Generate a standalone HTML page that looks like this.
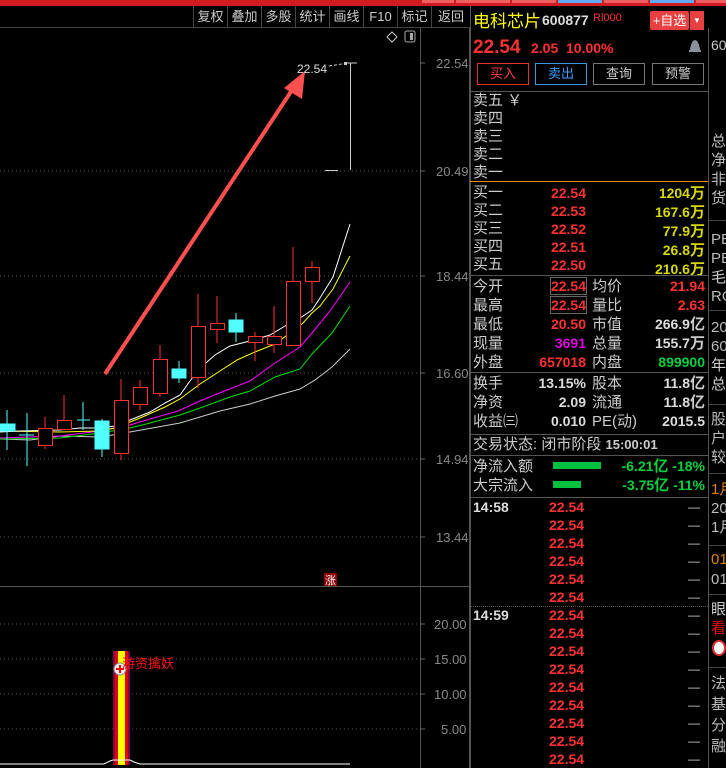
<!DOCTYPE html>
<html><head><meta charset="utf-8"><style>
*{margin:0;padding:0;box-sizing:border-box}
body{width:726px;height:768px;background:#000;overflow:hidden;position:relative;font-family:"Liberation Sans","Noto Sans CJK SC",sans-serif;color:#ccc}
.a{position:absolute;white-space:nowrap}
.cn{font-family:"Liberation Sans","Noto Sans CJK SC",sans-serif;font-size:15px;color:#ccc;line-height:18px}
.n{font-weight:bold;font-size:14px;line-height:18px}
.r{color:#ff3232}.y{color:#e8e800}.g{color:#00d040}.w{color:#ddd}.m{color:#e000e0}
.tb{position:absolute;top:6px;height:22px;border-left:1px solid #444;font-size:13px;color:#ccc;text-align:center;line-height:21px}
.hl{position:absolute;height:1px;background:#444}
.ax{font-size:13px;color:#888;font-family:"Liberation Sans",sans-serif}
.btn{position:absolute;top:63px;height:22px;font-size:13px;text-align:center;line-height:20px}
</style></head><body>
<div class="a" style="left:0;top:0;width:726px;height:6px;background:#d01c1f"></div>
<div class="a" style="left:422px;top:0;width:32px;height:3px;background:#f06060"></div>
<div class="a" style="left:456px;top:0;width:54px;height:3px;background:#f06060"></div>
<div class="a" style="left:512px;top:0;width:44px;height:3px;background:#f06060"></div>
<div class="a" style="left:558px;top:0;width:44px;height:3px;background:#60a8f0"></div>
<div class="a" style="left:604px;top:0;width:44px;height:3px;background:#f06060"></div>
<div class="a" style="left:650px;top:0;width:44px;height:3px;background:#60a8f0"></div>
<div class="a" style="left:696px;top:0;width:30px;height:3px;background:#f06060"></div>

<div class="tb" style="left:193px;width:34px">复权</div>
<div class="tb" style="left:227px;width:34px">叠加</div>
<div class="tb" style="left:261px;width:34px">多股</div>
<div class="tb" style="left:295px;width:34px">统计</div>
<div class="tb" style="left:329px;width:34px">画线</div>
<div class="tb" style="left:363px;width:34px">F10</div>
<div class="tb" style="left:397px;width:34px">标记</div>
<div class="tb" style="left:431px;width:39px">返回</div>
<div class="hl" style="left:0;top:27px;width:470px"></div>

<!-- chart svg -->
<svg class="a" style="left:0;top:0" width="470" height="768">
<g stroke="#555" stroke-dasharray="1,3">
<line x1="0" y1="171" x2="420" y2="171"/><line x1="0" y1="276" x2="420" y2="276"/><line x1="0" y1="373" x2="420" y2="373"/><line x1="0" y1="459" x2="420" y2="459"/><line x1="0" y1="537" x2="420" y2="537"/>
<line x1="0" y1="624" x2="420" y2="624"/><line x1="0" y1="659" x2="420" y2="659"/><line x1="0" y1="694" x2="420" y2="694"/><line x1="0" y1="729" x2="420" y2="729"/>
</g>
<line x1="420.5" y1="28" x2="420.5" y2="768" stroke="#555"/>
<line x1="0" y1="586.5" x2="470" y2="586.5" stroke="#555"/>
<line x1="469.5" y1="28" x2="469.5" y2="768" stroke="#555"/>
<g stroke="#666"><line x1="420" y1="63" x2="425" y2="63"/><line x1="420" y1="171" x2="425" y2="171"/><line x1="420" y1="276" x2="425" y2="276"/><line x1="420" y1="373" x2="425" y2="373"/><line x1="420" y1="459" x2="425" y2="459"/><line x1="420" y1="537" x2="425" y2="537"/>
<line x1="420" y1="624" x2="425" y2="624"/><line x1="420" y1="659" x2="425" y2="659"/><line x1="420" y1="694" x2="425" y2="694"/><line x1="420" y1="729" x2="425" y2="729"/></g>
<text x="436" y="68" class="ax" fill="#888" font-size="13">22.54</text>
<text x="436" y="176" fill="#888" font-size="13">20.49</text>
<text x="436" y="281" fill="#888" font-size="13">18.44</text>
<text x="436" y="378" fill="#888" font-size="13">16.60</text>
<text x="436" y="464" fill="#888" font-size="13">14.94</text>
<text x="436" y="542" fill="#888" font-size="13">13.44</text>
<text x="434" y="629" fill="#888" font-size="13">20.00</text>
<text x="434" y="664" fill="#888" font-size="13">15.00</text>
<text x="434" y="699" fill="#888" font-size="13">10.00</text>
<text x="441" y="734" fill="#888" font-size="13">5.00</text>
<!-- icons top right -->
<path d="M392 32 L397 37 L392 42 L387 37 Z" fill="none" stroke="#ccc"/>
<rect x="405" y="31" width="10" height="11" rx="2" fill="none" stroke="#aaa"/><rect x="410" y="33" width="3" height="7" fill="#aaa"/>
<!-- MA lines -->
<polyline fill="none" stroke="#ccc" stroke-width="1" points="0,439 30,440 60,436 100,437 130,432 180,423 220,411 250,404 275,396 300,389 315,380 332,367 350,349"/>
<polyline fill="none" stroke="#00e000" stroke-width="1" points="0,439 60,438 100,433 130,428 150,423 180,415 200,408 230,397 250,391 275,377 300,369 312,354 332,333 350,306"/>
<polyline fill="none" stroke="#ff00ff" stroke-width="1" points="0,438 60,436 100,431 130,425 150,419 178,411 200,401 222,392 250,381 275,363 300,347 312,333 330,311 350,282"/>
<polyline fill="none" stroke="#ffff00" stroke-width="1" points="0,431 60,432 100,431 115,428 140,418 165,407 180,399 200,384 220,371 237,360 255,352 275,344 290,333 303,323 312,313 320,306 333,289 350,256"/>
<polyline fill="none" stroke="#fff" stroke-width="1" points="0,432 20,431 60,430 80,428 100,428 115,426 130,420 150,412 165,403 180,395 190,381 200,368 215,355 230,346 250,341 270,335 285,326 300,318 312,310 320,298 333,277 350,224"/>
<!-- candles -->
<g stroke="#ff3030" fill="none" stroke-width="1">
<line x1="45" y1="417" x2="45" y2="449"/><rect x="38.5" y="428.5" width="14" height="17" fill="#000"/>
<line x1="64" y1="395" x2="64" y2="420"/><rect x="57.5" y="420.5" width="14" height="9" fill="#000"/>
<line x1="121" y1="379" x2="121" y2="460"/><rect x="114.5" y="400.5" width="14" height="53" fill="#000"/>
<line x1="140" y1="380" x2="140" y2="410"/><rect x="133.5" y="387.5" width="14" height="17" fill="#000"/>
<line x1="160" y1="345" x2="160" y2="397"/><rect x="153.5" y="359.5" width="14" height="34" fill="#000"/>
<line x1="198" y1="294" x2="198" y2="388"/><rect x="191.5" y="326.5" width="14" height="51" fill="#000"/>
<line x1="217" y1="296" x2="217" y2="343"/><rect x="210.5" y="323.5" width="14" height="6" fill="#000"/>
<line x1="255" y1="332" x2="255" y2="361"/><rect x="248.5" y="336.5" width="14" height="6" fill="#000"/>
<line x1="274" y1="306" x2="274" y2="353"/><rect x="267.5" y="336.5" width="14" height="8" fill="#000"/>
<line x1="293" y1="247" x2="293" y2="345"/><rect x="286.5" y="281.5" width="14" height="64" fill="#000"/>
<line x1="312" y1="261" x2="312" y2="303"/><rect x="305.5" y="267.5" width="14" height="14" fill="#000"/>
</g>
<g fill="#50ffff" stroke="#50ffff">
<line x1="7" y1="410" x2="7" y2="450"/><rect x="0" y="424" width="15" height="7"/>
<line x1="27" y1="413" x2="27" y2="466"/><line x1="19" y1="435" x2="34" y2="435"/>
<line x1="83" y1="402" x2="83" y2="430"/><line x1="77" y1="420" x2="90" y2="420"/>
<line x1="102" y1="419" x2="102" y2="457"/><rect x="95" y="421" width="14" height="28"/>
<line x1="179" y1="361" x2="179" y2="383"/><rect x="172" y="369" width="14" height="9"/>
<line x1="236" y1="313" x2="236" y2="342"/><rect x="229" y="320" width="14" height="12"/>
</g>
<!-- arrow -->
<line x1="105" y1="374" x2="296" y2="84" stroke="#ff5050" stroke-width="4"/>
<polygon points="305,71 284,88 302,99" fill="#ff5050"/>
<text x="297" y="73" fill="#ddd" font-size="12">22.54</text>
<line x1="329" y1="66" x2="348" y2="63" stroke="#ccc" stroke-dasharray="3,2"/>
<rect x="344" y="62" width="3" height="3" fill="#ccc"/>
<line x1="344" y1="63" x2="357" y2="63" stroke="#ccc"/>
<line x1="350.5" y1="63" x2="350.5" y2="170" stroke="#ccc"/>
<line x1="325" y1="170.5" x2="338" y2="170.5" stroke="#ccc"/>
<!-- 涨 marker -->
<rect x="324" y="573" width="13" height="13" fill="#8b0000"/>
<text x="325" y="584" fill="#fff" font-size="11" font-family="Noto Sans CJK SC">涨</text>
<!-- volume bar -->
<rect x="113" y="651" width="17" height="114" fill="#800050"/>
<rect x="115" y="651" width="13" height="114" fill="#e00000"/>
<rect x="118" y="651" width="7" height="114" fill="#ffff00"/>
<circle cx="120" cy="669" r="6" fill="#eee" stroke="#888"/>
<path d="M116 669 H124 M120 665 V673" stroke="#e00" stroke-width="2"/>
<text x="122" y="668" fill="#ff1010" font-size="13" font-family="Noto Sans CJK SC">游资擒妖</text>
<polyline fill="none" stroke="#fff" points="0,764 104,764 110,761 113,760 130,760 134,762 140,764 350,764"/>
</svg>

<!-- right panel -->
<div class="a" style="left:470px;top:6px;width:1px;height:762px;background:#555"></div>
<div class="a" style="left:708px;top:28px;width:1px;height:740px;background:#555"></div>
<div class="a" style="left:473px;top:9px;font-size:17px;color:#ffff00;font-family:'Noto Sans CJK SC',sans-serif;line-height:22px">电科芯片</div>
<div class="a n w" style="left:542px;top:11px;font-size:14px">600877</div>
<div class="a r" style="left:593px;top:12px;font-size:11px">R<span style="font-weight:normal">l000</span></div>
<div class="a" style="left:650px;top:11px;width:39px;height:19px;background:#e84040;color:#fff;font-size:13px;text-align:center;line-height:19px;border-radius:2px">+自选</div>
<div class="a" style="left:690px;top:11px;width:14px;height:19px;background:#e84040;color:#fff;font-size:8px;text-align:center;line-height:19px">▼</div>
<div class="a r" style="left:473px;top:36px;font-size:19px;font-weight:bold;line-height:24px">22.54</div>
<div class="a r" style="left:531px;top:40px;font-size:14px;font-weight:bold">2.05</div>
<div class="a r" style="left:566px;top:40px;font-size:14px;font-weight:bold">10.00%</div>
<svg class="a" style="left:688px;top:38px" width="14" height="16"><path d="M2 12 Q3 3 7 2 Q11 3 12 12 Z" fill="#8a929c"/><rect x="1" y="12" width="12" height="2" fill="#8a929c"/></svg>
<div class="btn" style="left:477px;width:52px;border:1px solid #e03030;color:#ff4040">买入</div>
<div class="btn" style="left:535px;width:52px;border:1px solid #3a9ae0;color:#3aa0ff">卖出</div>
<div class="btn" style="left:593px;width:52px;border:1px solid #777;color:#ccc">查询</div>
<div class="btn" style="left:652px;width:52px;border:1px solid #777;color:#ccc">预警</div>
<div class="hl" style="left:470px;top:91px;width:238px;background:#555"></div>

<div class="a cn" style="left:473px;top:92px">卖五 ￥<br>卖四<br>卖三<br>卖二<br>卖一</div>
<div class="hl" style="left:470px;top:181px;width:238px;background:#e09000"></div>
<div class="a cn" style="left:473px;top:184px">买一<br>买二<br>买三<br>买四<br>买五</div>
<div class="a n r" style="left:550px;top:184px;text-align:right;width:36px;line-height:18px">22.54<br>22.53<br>22.52<br>22.51<br>22.50</div>
<div class="a n" style="left:620px;top:184px;text-align:right;width:85px;line-height:18px;color:#d8d800">1204<span class="cn" style="color:#d8d800">万</span><br>167.6<span class="cn" style="color:#d8d800">万</span><br>77.9<span class="cn" style="color:#d8d800">万</span><br>26.8<span class="cn" style="color:#d8d800">万</span><br>210.6<span class="cn" style="color:#d8d800">万</span></div>
<div class="hl" style="left:470px;top:275px;width:238px;background:#555"></div>

<div class="a cn" style="left:473px;top:277px;line-height:19px">今开<br>最高<br>最低<br>现量<br>外盘</div>
<div class="a" style="left:550px;top:277px;width:37px;height:18px;border:1px solid #666"></div>
<div class="a" style="left:550px;top:296px;width:37px;height:18px;border:1px solid #666"></div>
<div class="a n" style="left:520px;top:277px;text-align:right;width:66px;line-height:19px"><span class="r">22.54</span><br><span class="r">22.54</span><br><span class="r">20.50</span><br><span class="m">3691</span><br><span class="r">657018</span></div>
<div class="a cn" style="left:592px;top:277px;line-height:19px">均价<br>量比<br>市值<br>总量<br>内盘</div>
<div class="a n" style="left:630px;top:277px;text-align:right;width:75px;line-height:19px"><span class="r">21.94</span><br><span class="r">2.63</span><br><span class="w">266.9<span class="cn">亿</span></span><br><span class="w">155.7<span class="cn">万</span></span><br><span class="g">899900</span></div>
<div class="hl" style="left:470px;top:372px;width:238px;background:#555"></div>
<div class="a cn" style="left:473px;top:374px;line-height:19px">换手<br>净资<br>收益㈢</div>
<div class="a n w" style="left:520px;top:374px;text-align:right;width:66px;line-height:19px">13.15%<br>2.09<br>0.010</div>
<div class="a cn" style="left:592px;top:374px;line-height:19px">股本<br>流通<br>PE(动)</div>
<div class="a n w" style="left:630px;top:374px;text-align:right;width:75px;line-height:19px">11.8<span class="cn">亿</span><br>11.8<span class="cn">亿</span><br>2015.5</div>
<div class="hl" style="left:470px;top:434px;width:238px;background:#555"></div>
<div class="a cn" style="left:473px;top:436px">交易状态: 闭市阶段 <b style="font-size:13px">15:00:01</b></div>
<div class="hl" style="left:470px;top:455px;width:238px;background:#555"></div>
<div class="a cn" style="left:473px;top:457px;line-height:19px">净流入额<br>大宗流入</div>
<div class="a" style="left:553px;top:462px;width:48px;height:7px;background:#00c040"></div>
<div class="a" style="left:553px;top:481px;width:28px;height:7px;background:#00c040"></div>
<div class="a n g" style="left:610px;top:457px;text-align:right;width:95px;line-height:19px">-6.21<span class="cn g">亿</span> -18%<br>-3.75<span class="cn g">亿</span> -11%</div>
<div class="hl" style="left:470px;top:497px;width:238px;background:#555"></div>

<div class="a n w" style="left:473px;top:498px">14:58</div>
<div class="a n w" style="left:473px;top:606px">14:59</div>
<div class="a" style="left:470px;top:606px;width:238px;border-top:1px dotted #555"></div>
<div class="a n r" style="left:549px;top:498px;line-height:18px">22.54<br>22.54<br>22.54<br>22.54<br>22.54<br>22.54<br>22.54<br>22.54<br>22.54<br>22.54<br>22.54<br>22.54<br>22.54<br>22.54<br>22.54</div>
<div class="a" style="left:688px;top:498px;line-height:18px;color:#ccc;font-size:12px">—<br>—<br>—<br>—<br>—<br>—<br>—<br>—<br>—<br>—<br>—<br>—<br>—<br>—<br>—</div>

<!-- far right column -->
<div class="a" style="left:711px;top:36px;font-size:14px;color:#ccc;line-height:18px">60</div>
<div class="a cn" style="left:711px;top:132px;line-height:19px;color:#bbb">总<br>净<br>非<br>货</div>
<div class="hl" style="left:709px;top:220px;width:17px"></div>
<div class="a" style="left:711px;top:230px;line-height:19px;color:#bbb;font-size:15px">PE<br>PE<br><span class="cn">毛</span><br>RO</div>
<div class="hl" style="left:709px;top:310px;width:17px"></div>
<div class="a" style="left:711px;top:318px;line-height:19px;color:#bbb;font-size:15px">20<br>60<br><span class="cn">年</span><br><span class="cn">总</span></div>
<div class="hl" style="left:709px;top:404px;width:17px"></div>
<div class="a cn" style="left:711px;top:410px;line-height:19px;color:#bbb">股<br>户<br>较</div>
<div class="hl" style="left:709px;top:473px;width:17px"></div>
<div class="a cn" style="left:711px;top:480px;line-height:19px"><span style="color:#e08000">1月</span><br><span style="color:#bbb">20</span><br><span style="color:#bbb">1月</span></div>
<div class="hl" style="left:709px;top:545px;width:17px"></div>
<div class="a" style="left:711px;top:550px;line-height:20px;font-size:15px"><span style="color:#e08000">01</span><br><span style="color:#bbb">01</span></div>
<div class="hl" style="left:709px;top:594px;width:17px"></div>
<div class="a cn" style="left:711px;top:600px;line-height:19px"><span style="color:#ccc">眼</span><br><span style="color:#e01010">看</span></div>
<div class="a" style="left:712px;top:640px;width:14px;height:16px;border:2px solid #e03030;border-radius:50%;background:#fff"></div>
<div class="hl" style="left:709px;top:667px;width:17px"></div>
<div class="a cn" style="left:711px;top:673px;line-height:21px;color:#bbb">法<br>基<br>分<br>融</div>
</body></html>
